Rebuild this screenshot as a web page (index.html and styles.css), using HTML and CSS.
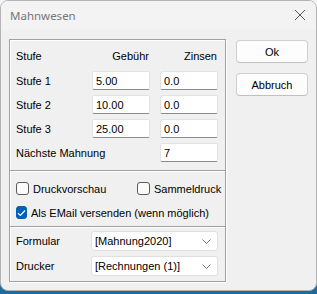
FILE: index.html
```html
<!DOCTYPE html>
<html lang="de">
<head>
    <meta charset="UTF-8">
    <title>Mahnwesen</title>
    <link rel="stylesheet" href="styles.css">
</head>
<body>
    <div class="window">
        <div class="titlebar">
            <span class="title">Mahnwesen</span>
            <svg class="close" width="12" height="12" viewBox="0 0 12 12">
                <path d="M1 1 L11 11 M11 1 L1 11" stroke="#555" stroke-width="1" fill="none"/>
            </svg>
        </div>

        <div class="client">
            <div class="group">
                <div class="section levels">
                    <span class="label">Stufe</span>
                    <span class="head">Gebühr</span>
                    <span class="head">Zinsen</span>

                    <span class="label">Stufe 1</span>
                    <input class="field" value="5.00">
                    <input class="field" value="0.0">

                    <span class="label">Stufe 2</span>
                    <input class="field" value="10.00">
                    <input class="field" value="0.0">

                    <span class="label">Stufe 3</span>
                    <input class="field" value="25.00">
                    <input class="field" value="0.0">

                    <span class="label wide">Nächste Mahnung</span>
                    <input class="field" value="7">
                </div>

                <div class="section options">
                    <div class="row">
                        <label class="check"><span class="box"></span>Druckvorschau</label>
                        <label class="check second"><span class="box"></span>Sammeldruck</label>
                    </div>
                    <div class="row">
                        <label class="check"><span class="box checked">
                            <svg width="9" height="8" viewBox="0 0 9 8"><path d="M1 4.2 L3.4 6.5 L8 1.5" stroke="#fff" stroke-width="1.2" fill="none"/></svg>
                        </span>Als EMail versenden (wenn möglich)</label>
                    </div>
                </div>

                <div class="section combos">
                    <span class="label">Formular</span>
                    <div class="combo"><span>[Mahnung2020]</span>
                        <svg width="9" height="5" viewBox="0 0 9 5"><path d="M0.5 0.5 L4.5 4.5 L8.5 0.5" stroke="#777" fill="none"/></svg>
                    </div>
                    <span class="label">Drucker</span>
                    <div class="combo"><span>[Rechnungen (1)]</span>
                        <svg width="9" height="5" viewBox="0 0 9 5"><path d="M0.5 0.5 L4.5 4.5 L8.5 0.5" stroke="#777" fill="none"/></svg>
                    </div>
                </div>
            </div>

            <div class="buttons">
                <button>Ok</button>
                <button>Abbruch</button>
            </div>
        </div>
    </div>
</body>
</html>
```

FILE: styles.css
```css
*{
    margin: 0;
    padding: 0;
    box-sizing: border-box;
}

html{
    background: linear-gradient(#f4f4f4 50%, #1b6c9e 50%);
}

body{
    width: 317px;
    height: 294px;
    font-family: "Liberation Sans", Arial, sans-serif;
    font-size: 11px;
    color: #000;
}

.window{
    height: 291px;
    background-color: #f0f0f0;
    border: 1px solid #b4b4b4;
    border-radius: 8px;
    overflow: hidden;
}

.titlebar{
    height: 29px;
    display: flex;
    align-items: center;
    justify-content: space-between;
    padding: 0 10px 0 9px;
    background-color: #f3f3f3;

    .title{
        font-family: "Noto Sans", sans-serif;
        font-size: 11.5px;
        color: #777;
        margin-top: -1px;
    }

    .close{
        margin-top: -1px;
    }
}

.client{
    display: flex;
    padding: 9px 0 0 8px;
}

.group{
    width: 217px;
    height: 243px;
    border: 1px solid #a0a0a0;
    box-shadow: inset 1px 1px 0 #fff, 1px 1px 0 #fff;
    display: flex;
    flex-direction: column;
}

.section{
    padding: 0 7px 0 6px;
}

.section + .section{
    border-top: 1px solid #a0a0a0;
    box-shadow: inset 0 1px 0 #fff;
}

.levels{
    display: grid;
    grid-template-columns: 66px 58px 58px;
    column-gap: 10px;
    row-gap: 5px;
    grid-auto-rows: 19px;
    grid-template-rows: 20px;
    align-items: center;
    padding-top: 6px;
    padding-bottom: 8px;

    .head{
        text-align: right;
        padding-right: 1px;
    }

    .wide{
        grid-column: span 2;
    }
}

.field{
    height: 19px;
    width: 58px;
    font: inherit;
    color: #000;
    background: #fff;
    border: 1px solid #e3e3e3;
    border-bottom: 1px solid #8c8c8c;
    border-radius: 2px;
    padding: 0 3px;
    outline: none;
}

.options{
    padding-top: 11px;
    height: 56px;

    .row{
        display: flex;
        height: 24px;
        align-items: flex-start;
    }

    .second{
        margin-left: 9px;
    }
}

.check{
    display: flex;
    flex-shrink: 0;
    align-items: center;
    width: 112px;
    white-space: nowrap;

    .box{
        width: 13px;
        height: 13px;
        border: 1px solid #5c5c5c;
        border-radius: 3px;
        background: #fbfbfb;
        margin-right: 4px;
        display: flex;
        align-items: center;
        justify-content: center;
    }

    .checked{
        background: #005fb8;
        border-color: #005fb8;
    }
}

.combos{
    display: grid;
    grid-template-columns: 75px 127px;
    grid-auto-rows: 20px;
    row-gap: 5px;
    align-items: center;
    padding-top: 4px;
}

.combo{
    height: 20px;
    background: #fff;
    border: 1px solid #e0e0e0;
    border-radius: 3px;
    display: flex;
    align-items: center;
    justify-content: space-between;
    padding: 0 6px 0 3px;
}

.buttons{
    display: flex;
    flex-direction: column;
    gap: 10px;
    margin-left: 10px;
    margin-top: 1px;

    button{
        width: 72px;
        height: 23px;
        font: inherit;
        color: #000;
        background: #fdfdfd;
        border: 1px solid #d0d0d0;
        border-bottom-color: #c0c0c0;
        border-radius: 4px;
    }
}
```
